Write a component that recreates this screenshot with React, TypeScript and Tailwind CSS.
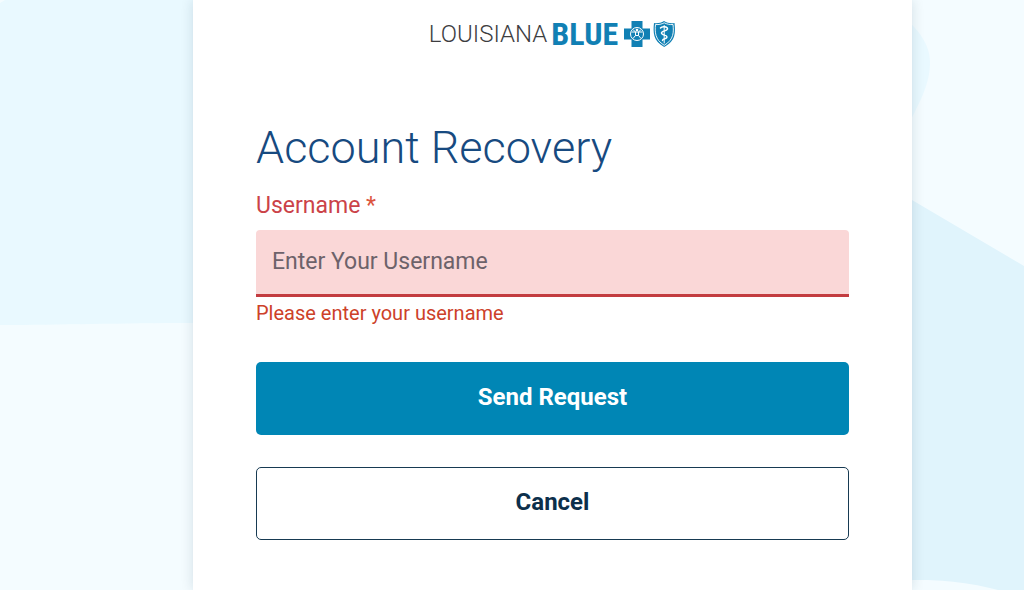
import { useState } from 'react';

const Backdrop = () => (
  <svg
    className="absolute inset-0 h-full w-full"
    viewBox="0 0 1024 590"
    preserveAspectRatio="none"
    aria-hidden="true"
  >
    <rect width="1024" height="590" fill="#f4fcff" />
    <path d="M5 0H880C912 20 930 40 930 62C930 90 914 110 904 135L700 323H193C120 323 60 325 0 325V3Z" fill="#e9f9ff" />
    <path d="M700 80C790 80 840 155 912 200L1024 266V590H998C960 580 930 580 912 580H700Z" fill="#e0f4fc" />
  </svg>
);

const CrossIcon = () => (
  <svg className="h-7 w-[27px]" viewBox="0 0 27 28" aria-hidden="true">
    <path d="M7.500 1H18.500V8.500H26V19.500H18.500V27H7.500V19.500H0V8.500H7.500Z" fill="#1180b4" />
    <g fill="none" stroke="#fff" strokeWidth="1">
      <circle cx="13" cy="14" r="6.500" />
      <path d="M7.500 12H18.500M11.500 12V15.500L9 18.500M14.500 12V15.500L17 18.500M11.500 15.500H14.500M9 9.500L11.500 12M17 9.500L14.500 12" />
    </g>
    <circle cx="13" cy="10" r="1.300" fill="#fff" />
  </svg>
);

const ShieldIcon = () => (
  <svg className="h-7 w-[23px]" viewBox="0 0 23 28" aria-hidden="true">
    <path d="M1 3C4 3.500 8 3 11 1C14 3 18 3.500 21.500 3C22.500 12 23 21 11.200 27C0 21 0 12 1 3Z" fill="#1180b4" />
    <path d="M2.500 4.500C6 4.800 8.500 4.200 11.200 2.800C14 4.200 17 4.800 20 4.500C20.800 12 21 19.500 11.200 25.300C1.800 19.500 1.800 12 2.500 4.500Z" fill="none" stroke="#fff" strokeWidth="0.900" />
    <g fill="none" stroke="#fff" strokeLinecap="round">
      <path d="M11.200 5.500V23" strokeWidth="1" />
      <path d="M7.500 8C9 6 14.500 6.500 14.500 8.800C14.500 11.200 8.500 10.500 8.500 13C8.500 15.500 14 14.700 14 17C14 19 9.500 18.500 9.500 20.500" strokeWidth="1.500" />
    </g>
  </svg>
);

const Logo = () => (
  <div className="flex h-7 items-center justify-center">
    <span className="mr-1 text-2xl leading-7 font-light text-[#3d3d3f]">LOUISIANA</span>
    <span className="mr-1.5 font-['Roboto_Condensed','Liberation_Sans_Narrow',Roboto,sans-serif] text-[32px] leading-7 font-bold text-[#1180b4]">
      BLUE
    </span>
    <CrossIcon />
    <span className="ml-0.5 flex">
      <ShieldIcon />
    </span>
  </div>
);

const App = () => {
  const [username, setUsername] = useState('');

  return (
    <div className="relative grid min-h-screen grid-cols-[193fr_719fr_112fr] font-[Roboto,sans-serif]">
      <Backdrop />

      <main className="relative col-start-2 bg-white px-[63px] pt-5 pb-12 shadow-[0_0_12px_rgba(0,40,70,0.14)]">
        <Logo />

        <form className="mt-[70px]" noValidate onSubmit={(e) => e.preventDefault()}>
          <h1 className="text-[45px] leading-[60px] font-light text-[#174a80]">Account Recovery</h1>

          <label htmlFor="username" className="mt-3 block text-[23px] leading-8 text-[#cb4248]">
            Username <span className="text-[#dc5540]">*</span>
          </label>
          <input
            id="username"
            type="text"
            required
            aria-invalid="true"
            aria-describedby="username-error"
            placeholder="Enter Your Username"
            value={username}
            onChange={(e) => setUsername(e.target.value)}
            className="mt-2 block h-[67px] w-full rounded-t border-b-3 border-[#c33c40] bg-[#fad7d7] px-4 pb-0.5 text-[23px] text-[#333] outline-none placeholder:text-[#6d626a]"
          />
          <p id="username-error" className="mt-0.5 text-[20px] leading-7 text-[#cd4129]">
            Please enter your username
          </p>

          <button
            type="submit"
            className="mt-[35px] block h-[73px] w-full rounded-[5px] bg-[#0086b5] pb-1 text-2xl font-bold text-white"
          >
            Send Request
          </button>
          <button
            type="button"
            className="mt-8 block h-[73px] w-full rounded-[5px] border border-[#173a52] bg-white pb-1 text-2xl font-bold text-[#0c2f4b]"
          >
            Cancel
          </button>
        </form>
      </main>
    </div>
  );
};

export default App;
